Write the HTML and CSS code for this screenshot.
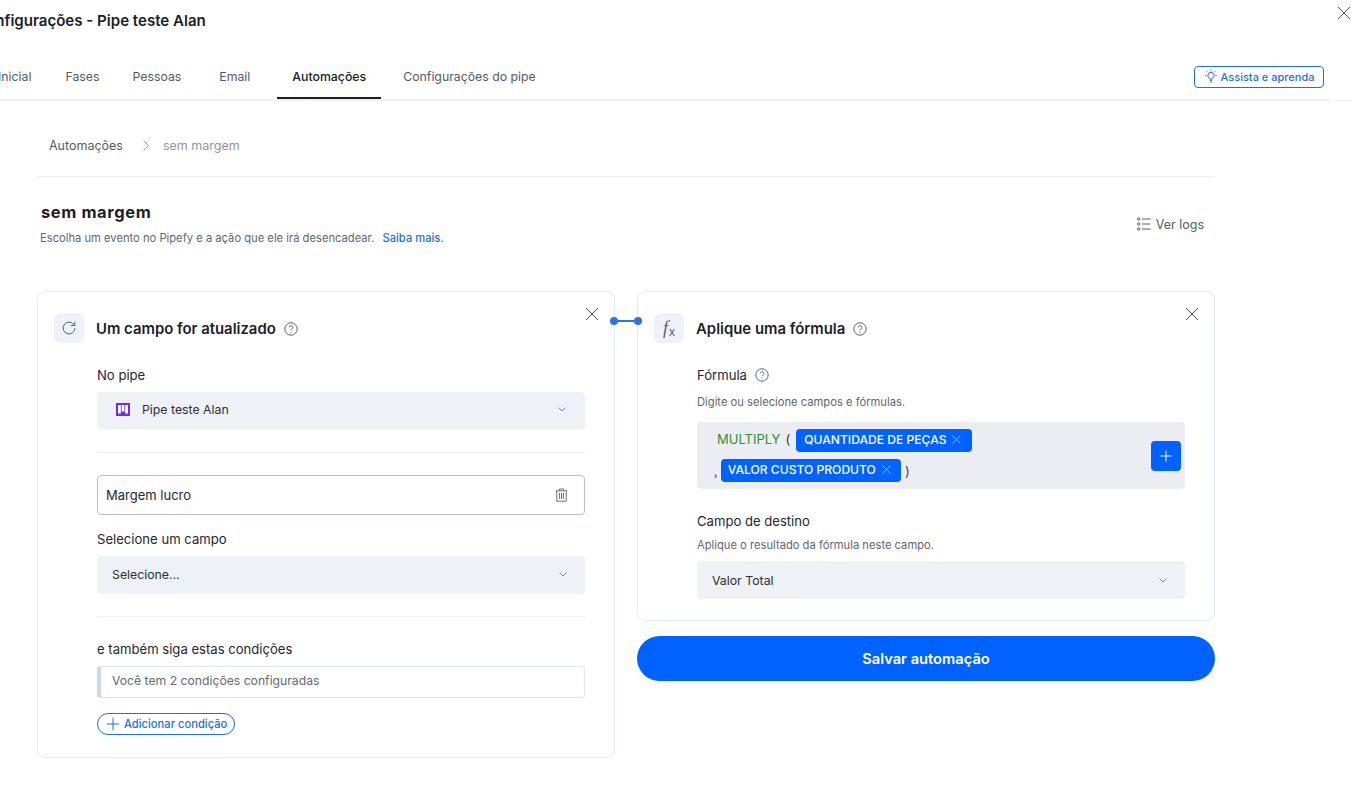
FILE: index.html
```html
<!DOCTYPE html>
<html lang="pt-BR">
<head>
    <meta charset="UTF-8">
    <title>Configurações - Pipe teste Alan</title>
    <link rel="stylesheet" href="styles.css">
</head>
<body>
    <header class="top">
        <h1 class="page-title">Configurações - Pipe teste Alan</h1>
        <button class="close-page" aria-label="Fechar">
            <svg width="14" height="14" viewBox="0 0 14 14"><path d="M1 1l12 12M13 1L1 13"/></svg>
        </button>
        <nav class="tabs">
            <a class="tab tab-first">Inicial</a>
            <a class="tab">Fases</a>
            <a class="tab tab-people">Pessoas</a>
            <a class="tab tab-email">Email</a>
            <a class="tab active">Automações</a>
            <a class="tab">Configurações do pipe</a>
            <a class="learn">
                <svg width="14" height="15" viewBox="0 0 14 15"><path d="M7 3.400a3.100 3.100 0 0 0-1.800 5.600c.4.300.6.700.6 1.200h2.400c0-.5.200-.9.600-1.200A3.100 3.100 0 0 0 7 3.400zM5.800 11.600h2.400M6.200 13.200h1.600M7 .6v1.400M1.200 6.400h1.400M11.400 6.400h1.400M2.900 2.300l1 1M11.100 2.300l-1 1"/></svg>
                Assista e aprenda
            </a>
        </nav>
    </header>

    <main class="content">
        <div class="crumbs">
            <span>Automações</span>
            <svg width="8" height="11" viewBox="0 0 8 11"><path d="M1.500 .5L6.500 5.500 1.500 10.500"/></svg>
            <span class="crumb-current">sem margem</span>
        </div>

        <div class="intro">
            <div>
                <h2 class="auto-name">sem margem</h2>
                <p class="auto-desc">Escolha um evento no Pipefy e a ação que ele irá desencadear. <a class="more">Saiba mais.</a></p>
            </div>
            <a class="logs">
                <svg width="14" height="14" viewBox="0 0 14 14"><circle cx="1.700" cy="2" r="1.200"/><circle cx="1.700" cy="7" r="1.200"/><circle cx="1.700" cy="12" r="1.200"/><path d="M5 2h8.500M5 7h8.500M5 12h8.500"/></svg>
                Ver logs
            </a>
        </div>

        <div class="builder">
            <section class="card card-left">
                <button class="card-close" aria-label="Remover">
                    <svg width="14" height="14" viewBox="0 0 14 14"><path d="M1 1l12 12M13 1L1 13"/></svg>
                </button>
                <div class="card-head">
                    <span class="card-icon">
                        <svg width="16" height="16" viewBox="0 0 16 16"><path d="M13.900 8.200a5.900 5.900 0 1 1-1.800-4.400l1.700 1.700M13.800 1.600v3.900H10"/></svg>
                    </span>
                    <h3 class="card-title">Um campo for atualizado</h3>
                    <svg class="help" width="14" height="14" viewBox="0 0 14 14"><circle cx="7" cy="7" r="6.200"/><path d="M5.200 5.400a1.800 1.800 0 1 1 2.700 1.600c-.6.300-.9.700-.9 1.300"/><circle class="dot" cx="7" cy="10.200" r=".6"/></svg>
                </div>

                <div class="card-body">
                    <label class="field-label">No pipe</label>
                    <div class="select select-pipe">
                        <span class="select-value">
                            <svg class="pipe-icon" width="14" height="13" viewBox="0 0 14 13"><path d="M0 0h14v13H0z" fill="#6e2fe0"/><path d="M2 2h2.800v8.500H2zM5.600 2h2.800v6.500H5.600zM9.200 2H12v8.500H9.200z" fill="#fff"/></svg>
                            Pipe teste Alan
                        </span>
                        <svg class="chevron" width="8" height="5" viewBox="0 0 8 5"><path d="M.5 .5L4 4 7.500 .5"/></svg>
                    </div>
                    <hr class="divider">
                    <div class="text-input">
                        <span>Margem lucro</span>
                        <svg class="trash" width="13" height="14" viewBox="0 0 13 14"><path d="M.8 2.800h11.400M4.400 2.800V1h4.200v1.800M1.800 2.800v10.400h9.400V2.800M4.600 5v6M6.500 5v6M8.400 5v6"/></svg>
                    </div>
                    <label class="field-label label-campo">Selecione um campo</label>
                    <div class="select select-campo">
                        <span class="select-value">Selecione...</span>
                        <svg class="chevron" width="8" height="5" viewBox="0 0 8 5"><path d="M.5 .5L4 4 7.500 .5"/></svg>
                    </div>
                    <hr class="divider divider-low">
                    <label class="field-label">e também siga estas condições</label>
                    <div class="conditions">Você tem 2 condições configuradas</div>
                    <a class="add-condition">
                        <svg width="14" height="14" viewBox="0 0 14 14"><path d="M7 .8v12.400M.8 7h12.400"/></svg>
                        Adicionar condição
                    </a>
                </div>
            </section>

            <div class="right-col">
                <section class="card card-right">
                    <button class="card-close" aria-label="Remover">
                        <svg width="14" height="14" viewBox="0 0 14 14"><path d="M1 1l12 12M13 1L1 13"/></svg>
                    </button>
                    <div class="card-head">
                        <span class="card-icon fx">f<sub>x</sub></span>
                        <h3 class="card-title">Aplique uma fórmula</h3>
                        <svg class="help" width="14" height="14" viewBox="0 0 14 14"><circle cx="7" cy="7" r="6.200"/><path d="M5.200 5.400a1.800 1.800 0 1 1 2.700 1.600c-.6.300-.9.700-.9 1.300"/><circle class="dot" cx="7" cy="10.200" r=".6"/></svg>
                    </div>

                    <div class="card-body">
                        <label class="field-label label-help">
                            Fórmula
                            <svg class="help" width="14" height="14" viewBox="0 0 14 14"><circle cx="7" cy="7" r="6.200"/><path d="M5.200 5.400a1.800 1.800 0 1 1 2.700 1.600c-.6.300-.9.700-.9 1.300"/><circle class="dot" cx="7" cy="10.200" r=".6"/></svg>
                        </label>
                        <p class="hint hint-formula">Digite ou selecione campos e fórmulas.</p>
                        <div class="formula">
                            <div class="formula-line line-one">
                                <span class="fn">MULTIPLY</span>
                                <span class="paren">(</span>
                                <span class="tag">QUANTIDADE DE PEÇAS <svg width="9" height="9" viewBox="0 0 9 9"><path d="M.5 .5l8 8M8.500 .5l-8 8"/></svg></span>
                            </div>
                            <div class="formula-line line-two">
                                <span class="paren">,</span>
                                <span class="tag">VALOR CUSTO PRODUTO <svg width="9" height="9" viewBox="0 0 9 9"><path d="M.5 .5l8 8M8.500 .5l-8 8"/></svg></span>
                                <span class="paren">)</span>
                            </div>
                            <button class="formula-add" aria-label="Adicionar">
                                <svg width="12" height="12" viewBox="0 0 12 12"><path d="M6 .5v11M.5 6h11"/></svg>
                            </button>
                        </div>
                        <label class="field-label label-destino">Campo de destino</label>
                        <p class="hint">Aplique o resultado da fórmula neste campo.</p>
                        <div class="select select-destino">
                            <span class="select-value">Valor Total</span>
                            <svg class="chevron" width="8" height="5" viewBox="0 0 8 5"><path d="M.5 .5L4 4 7.500 .5"/></svg>
                        </div>
                    </div>
                </section>
                <button class="save">Salvar automação</button>
            </div>

            <div class="connector"></div>
        </div>
    </main>
</body>
</html>
```

FILE: styles.css
```css
* {
    box-sizing: border-box;
}

html, body {
    height: 100%;
}

body {
    margin: 0;
    font-family: Inter, "Liberation Sans", sans-serif;
    color: #1c1e26;
    background: #fff;
    overflow: hidden;
}

svg {
    fill: none;
    stroke: currentColor;
    stroke-width: 1;
    flex-shrink: 0;
}

button {
    font-family: inherit;
    border: 0;
    background: none;
    padding: 0;
    display: block;
}

/* cabecalho */
.top {
    position: relative;
    height: 101px;
    border-bottom: 1px solid #f0f1f4;
}

.page-title {
    margin: 0 0 0 -25px;
    padding-top: 12px;
    font-size: 15.05px;
    line-height: 18px;
    font-weight: 600;
    white-space: nowrap;
}

.close-page {
    position: absolute;
    left: 1337px;
    top: 6px;
    color: #4a4f59;
    line-height: 0;
}

.tabs {
    display: flex;
    align-items: flex-start;
    height: 41px;
    margin: 29px 22px 0 -17px;
    font-size: 12.3px;
    color: #555b66;
    border-bottom: 1px solid #f0f1f4;
}

.tab {
    height: 40px;
    line-height: 36px;
    padding: 0 15px;
    margin-right: 3px;
    font-weight: 400;
    white-space: nowrap;
}

.tab-first {
    margin-right: 4px;
}

.tab-people {
    margin-right: 8px;
}

.tab-email {
    margin-right: 12px;
}

.tab.active {
    margin-right: 7px;
    color: #1c1e26;
    font-weight: 500;
    border-bottom: 2px solid #1c1e2e;
}

.learn {
    margin: 7px 6px 0 auto;
    height: 22px;
    width: 130px;
    display: flex;
    align-items: center;
    justify-content: center;
    gap: 3px;
    padding-bottom: 1px;
    border: 1px solid #1f6fdc;
    border-radius: 4px;
    font-size: 11px;
    font-weight: 500;
    color: #2a6fd6;
}

/* conteudo */
.content {
    width: 1178px;
    margin-left: 37px;
}

.crumbs {
    height: 76px;
    padding: 36px 0 0 12px;
    display: flex;
    align-items: flex-start;
    gap: 19px;
    font-size: 12.5px;
    line-height: 17px;
    color: #555b66;
    border-bottom: 1px solid #eceef1;
}

.crumbs svg {
    margin: 3px -6px 0 0;
    color: #9aa0a8;
}

.crumb-current {
    color: #8f959e;
}

.intro {
    display: flex;
    justify-content: space-between;
    height: 114px;
    padding: 25px 11px 0 3px;
}

.auto-name {
    margin: 0 0 0 1px;
    font-size: 16.5px;
    line-height: 20px;
    font-weight: 700;
    letter-spacing: 0.6px;
}

.auto-desc {
    margin: 9px 0 0;
    font-size: 11.2px;
    line-height: 15px;
    color: #5f6570;
}

.more {
    margin-left: 5px;
    font-weight: 500;
    color: #1f6fdc;
}

.logs {
    display: flex;
    align-items: center;
    gap: 5px;
    height: 20px;
    margin-top: 12px;
    font-size: 12.5px;
    color: #555b66;
}

/* cards */
.builder {
    position: relative;
    display: flex;
    gap: 22px;
    align-items: flex-start;
}

.card {
    position: relative;
    width: 578px;
    background: #fff;
    border: 1px solid #e2e9f1;
    border-radius: 8px;
    padding: 21px 29px 0 16px;
}

.card-left {
    height: 467px;
}

.card-right {
    height: 330px;
}

.card-close {
    position: absolute;
    top: 15px;
    right: 15px;
    color: #4a4f59;
    line-height: 0;
}

.card-head {
    display: flex;
    align-items: center;
    height: 30px;
}

.card-icon {
    width: 30px;
    height: 30px;
    margin-right: 12px;
    border-radius: 7px;
    background: #eef1fb;
    color: #5b6069;
    display: flex;
    align-items: center;
    justify-content: center;
}

.fx {
    font-family: "Liberation Serif", serif;
    font-style: italic;
    font-size: 18px;
}

.fx sub {
    font-family: "Liberation Sans", sans-serif;
    font-style: normal;
    font-size: 12px;
    line-height: 0;
    margin: 7px 0 0 1px;
}

.card-title {
    margin: 2px 0 0;
    font-size: 14.9px;
    line-height: 18px;
    font-weight: 600;
}

.help {
    margin: 2px 0 0 8px;
    color: #5b6069;
}

.label-help .help {
    margin-top: 0;
}

.help .dot {
    fill: currentColor;
    stroke: none;
}

.card-body {
    padding: 23px 0 0 43px;
}

.field-label {
    display: block;
    font-size: 13.1px;
    line-height: 18px;
    color: #24262e;
}

.label-help {
    display: flex;
    align-items: center;
}

.label-campo {
    margin-top: 15px;
}

.label-destino {
    margin-top: 23px;
}

.hint {
    margin: 8px 0 0;
    font-size: 11.2px;
    line-height: 15px;
    color: #5f6570;
}

.hint-formula {
    margin-top: 11px;
}

.select {
    display: flex;
    align-items: center;
    justify-content: space-between;
    background: #eef1f6;
    border-radius: 4px;
    margin-top: 8px;
    padding: 0 18px 0 15px;
    font-size: 12.3px;
    color: #2c2f38;
}

.select-pipe {
    height: 37px;
    padding: 0 19px 2px 19px;
}

.select-campo {
    height: 38px;
    padding-bottom: 2px;
}

.select-destino {
    height: 38px;
}

.select-value {
    display: flex;
    align-items: center;
    gap: 12px;
}

.pipe-icon {
    stroke: none;
}

.chevron {
    color: #80858e;
}

.divider {
    margin: 23px 0 0;
    border: 0;
    border-top: 1px solid #edf1f5;
}

.divider-low {
    margin: 22px 0 23px;
}

.text-input {
    display: flex;
    align-items: center;
    justify-content: space-between;
    height: 40px;
    margin-top: 22px;
    padding: 0 16px 0 8px;
    border: 1px solid #b4c0cb;
    border-radius: 4px;
    font-size: 13px;
    color: #24262e;
}

.trash {
    color: #6a6f78;
}

.conditions {
    height: 32px;
    margin-top: 8px;
    padding-left: 11px;
    line-height: 28px;
    border: 1px solid #dfe6ee;
    border-left: 4px solid #c9dbea;
    border-radius: 3px;
    font-size: 12.2px;
    color: #646a74;
}

.add-condition {
    display: flex;
    align-items: center;
    gap: 4px;
    width: 138px;
    height: 22px;
    margin-top: 15px;
    padding-left: 8px;
    border: 1px solid #1f6fdc;
    border-radius: 11px;
    font-size: 11.2px;
    font-weight: 500;
    color: #1f6fdc;
}

/* formula */
.formula {
    position: relative;
    height: 67px;
    margin-top: 12px;
    padding: 7px 0 0 16px;
    background: #ebedf2;
    border-radius: 4px;
    font-size: 13px;
}

.formula-line {
    display: flex;
    align-items: center;
    gap: 5px;
    height: 23px;
}

.line-two {
    margin: 7px 0 0 1px;
}

.fn {
    color: #2f8f3a;
    margin: 0 0 3px 4px;
}

.line-one .paren {
    margin-bottom: 3px;
}

.paren {
    color: #3a3d46;
}

.tag {
    display: flex;
    align-items: center;
    gap: 6px;
    height: 23px;
    padding: 0 11px 2px 8px;
    margin-left: 1px;
    background: #0062ff;
    border-radius: 4px;
    color: #fff;
    font-size: 12.1px;
    font-weight: 500;
    white-space: nowrap;
}

.line-two .tag {
    margin: 0 -1px 0 -2px;
    padding-left: 7px;
    padding-right: 10px;
}

.tag svg {
    color: #a9cbff;
}

.formula-add {
    position: absolute;
    right: 4px;
    top: 19px;
    width: 30px;
    height: 30px;
    border-radius: 4px;
    background: #0062ff;
    color: #fff;
    display: flex;
    align-items: center;
    justify-content: center;
}

.right-col {
    width: 578px;
}

.save {
    width: 100%;
    height: 45px;
    margin-top: 15px;
    border-radius: 23px;
    background: #0062ff;
    color: #fff;
    font-size: 14.7px;
    font-weight: 600;
}

/* ligacao entre os cards */
.connector {
    position: absolute;
    left: 577px;
    top: 29px;
    width: 24px;
    height: 1.5px;
    background: #2b74e6;
}

.connector::before,
.connector::after {
    content: "";
    position: absolute;
    top: -3px;
    width: 8px;
    height: 8px;
    border-radius: 50%;
    background: #2b74e6;
}

.connector::before {
    left: -4px;
}

.connector::after {
    right: -4px;
}
```
